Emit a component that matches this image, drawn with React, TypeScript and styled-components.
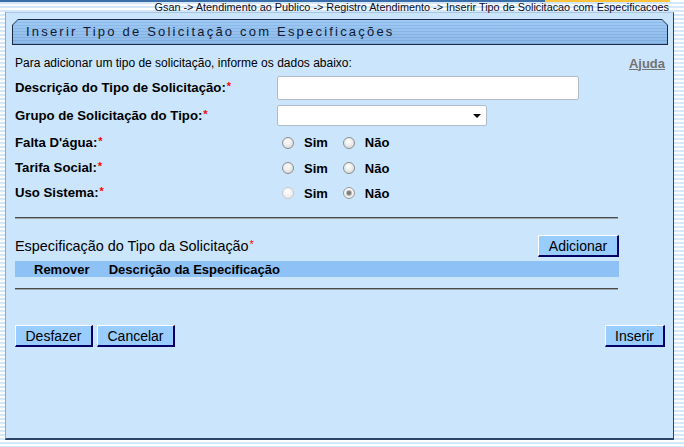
import styled, { createGlobalStyle } from 'styled-components';

const GlobalStyle = createGlobalStyle`
  html, body {
    margin: 0;
    padding: 0;
  }
  body {
    font-family: 'Liberation Sans', Arial, sans-serif;
    color: #000;
  }
`;

const Page = styled.div`
  width: 684px;
  height: 447px;
  overflow: hidden;
  background: repeating-linear-gradient(
    to bottom,
    #ffffff 0px,
    #ffffff 2px,
    #d3e7f8 2px,
    #d3e7f8 4px
  );
`;

const TopLine = styled.div`
  display: flex;
  height: 2px;
  width: 670px;
`;

const LineSegment = styled.div<{ $color: string; $width?: number }>`
  background: ${({ $color }) => $color};
  ${({ $width }) => ($width ? `width: ${$width}px;` : 'flex: 1;')}
`;

const Breadcrumb = styled.div`
  height: 10px;
  line-height: 10px;
  padding-right: 15px;
  text-align: right;
  font-size: 10.85px;
  color: #0c0c24;
  white-space: nowrap;
`;

const Panel = styled.div`
  box-sizing: border-box;
  margin-left: 5px;
  width: 669px;
  height: 428px;
  background: #cbe5fc;
  border-top: 1px solid #a9c6e2;
  border-left: 1px solid #8ea9c6;
  border-right: 1px solid #2b4468;
  border-bottom: 2px solid #2b4468;
`;

const TitleTab = styled.div`
  margin: 6px 5px 0 6px;
  height: 26px;
  padding: 1px;
  box-sizing: border-box;
  background: #1c2a42;
  clip-path: polygon(6px 0, calc(100% - 6px) 0, 100% 6px, 100% 100%, 0 100%, 0 6px);
`;

const TitleInner = styled.div`
  height: 100%;
  box-sizing: border-box;
  padding-left: 13px;
  line-height: 24px;
  font-size: 13px;
  letter-spacing: 2.2px;
  color: #0e1a33;
  background:
    repeating-linear-gradient(to bottom, rgba(255, 255, 255, 0.08) 0 2px, rgba(0, 40, 100, 0.06) 2px 3px),
    linear-gradient(to bottom, #98c6f4, #84b3e6);
  clip-path: polygon(5px 0, calc(100% - 5px) 0, 100% 5px, 100% 100%, 0 100%, 0 5px);
`;

const Content = styled.div`
  padding: 0 8px 0 9px;
`;

const IntroRow = styled.div`
  margin-top: 7px;
  height: 22px;
  display: flex;
  align-items: center;
  justify-content: space-between;
  font-size: 12px;
`;

const HelpLink = styled.a`
  font-size: 13px;
  font-weight: bold;
  color: #737373;
  text-decoration: underline;
  cursor: pointer;
`;

const FormRow = styled.div<{ $height: number }>`
  display: grid;
  grid-template-columns: 262px 1fr;
  align-items: center;
  height: ${({ $height }) => $height}px;
`;

const Label = styled.span`
  font-size: 13.2px;
  font-weight: bold;
`;

const Required = styled.span`
  color: #ff0000;
  font-size: 11px;
  vertical-align: top;
  margin-left: 1px;
`;

const TextInput = styled.input`
  box-sizing: border-box;
  width: 302px;
  height: 24px;
  border: 1px solid #b2bcc8;
  border-radius: 2px;
  background: #fff;
  outline: none;
`;

const SelectBox = styled.div`
  position: relative;
  box-sizing: border-box;
  width: 210px;
  height: 21px;
  border: 1px solid #b2bcc8;
  border-radius: 2px;
  background: #fff;

  &::after {
    content: '';
    position: absolute;
    right: 5px;
    top: 8px;
    border-left: 4px solid transparent;
    border-right: 4px solid transparent;
    border-top: 4px solid #000;
  }
`;

const RadioGroup = styled.div`
  display: flex;
  align-items: center;
  padding-top: 1px;
`;

const Radio = styled.input.attrs({ type: 'radio' })`
  appearance: none;
  box-sizing: border-box;
  width: 12px;
  height: 12px;
  margin: 0 10px 0 5px;
  border-radius: 50%;
  border: 1px solid #8d8d8d;
  background: radial-gradient(circle at 45% 35%, #ffffff 0%, #eeeeee 40%, #cfcfcf 100%);
  display: grid;
  place-items: center;

  &:disabled {
    border-color: #c9c9c9;
    background: radial-gradient(circle at 45% 35%, #ffffff 0%, #f2f2f2 50%, #e2e2e2 100%);
  }

  &:checked::after {
    content: '';
    width: 4px;
    height: 4px;
    border-radius: 50%;
    background: #7a7a7a;
    box-shadow: 0 0 0 1px #b5b5b5;
  }

  &:checked:disabled {
    border-color: #9a9a9a;
  }
`;

const RadioText = styled.span`
  font-size: 13px;
  font-weight: bold;
  margin-right: 10px;
`;

const Divider = styled.div<{ $top: number }>`
  margin-top: ${({ $top }) => $top}px;
  width: 603px;
  border-top: 1px solid #4a4a4a;
  border-bottom: 1px solid #9aa6b2;
`;

const SpecRow = styled.div`
  margin-top: 16px;
  width: 604px;
  height: 22px;
  display: flex;
  align-items: center;
  justify-content: space-between;
`;

const SpecTitle = styled.span`
  font-size: 14.4px;
`;

const TableHeader = styled.div`
  margin-top: 4px;
  width: 604px;
  height: 16px;
  display: flex;
  align-items: center;
  gap: 19px;
  padding-left: 19px;
  box-sizing: border-box;
  background: #8ec2f7;
  font-size: 13px;
  font-weight: bold;
`;

const Footer = styled.div`
  margin-top: 35px;
  display: flex;
  justify-content: space-between;
`;

const ButtonGroup = styled.div`
  display: flex;
  gap: 4px;
`;

const Button = styled.button<{ $width: number }>`
  box-sizing: border-box;
  width: ${({ $width }) => $width}px;
  height: 22px;
  padding: 0;
  background: #99ccff;
  border-style: solid;
  border-width: 1px 2px 2px 1px;
  border-color: #ffffff #000066 #000066 #ffffff;
  font-family: 'Liberation Sans', Arial, sans-serif;
  font-size: 14px;
  color: #000;
  cursor: pointer;
`;

type RadioRow = {
  label: string;
  name: string;
  disabled?: boolean;
  checked?: 'sim' | 'nao';
};

const radioRows: RadioRow[] = [
  { label: "Falta D'água:", name: 'faltaAgua' },
  { label: 'Tarifa Social:', name: 'tarifaSocial' },
  { label: 'Uso Sistema:', name: 'usoSistema', disabled: true, checked: 'nao' },
];

export default function App() {
  return (
    <>
      <GlobalStyle />
      <Page>
        <TopLine>
          <LineSegment $color="#3b6ea8" $width={545} />
          <LineSegment $color="#ffc23c" />
        </TopLine>
        <Breadcrumb>
          Gsan -&gt; Atendimento ao Publico -&gt; Registro Atendimento -&gt; Inserir Tipo de
          Solicitacao com Especificacoes
        </Breadcrumb>
        <Panel>
          <TitleTab>
            <TitleInner>Inserir Tipo de Solicitação com Especificações</TitleInner>
          </TitleTab>
          <Content>
            <IntroRow>
              <span>Para adicionar um tipo de solicitação, informe os dados abaixo:</span>
              <HelpLink>Ajuda</HelpLink>
            </IntroRow>
            <FormRow $height={27}>
              <Label>
                Descrição do Tipo de Solicitação:<Required>*</Required>
              </Label>
              <TextInput type="text" />
            </FormRow>
            <FormRow $height={28}>
              <Label>
                Grupo de Solicitação do Tipo:<Required>*</Required>
              </Label>
              <SelectBox />
            </FormRow>
            {radioRows.map((row, i) => (
              <FormRow key={row.name} $height={i === 0 ? 26 : 25}>
                <Label>
                  {row.label}
                  <Required>*</Required>
                </Label>
                <RadioGroup>
                  <Radio
                    name={row.name}
                    disabled={row.disabled}
                    defaultChecked={row.checked === 'sim'}
                  />
                  <RadioText>Sim</RadioText>
                  <Radio
                    name={row.name}
                    disabled={row.disabled}
                    defaultChecked={row.checked === 'nao'}
                  />
                  <RadioText>Não</RadioText>
                </RadioGroup>
              </FormRow>
            ))}
            <Divider $top={12} />
            <SpecRow>
              <SpecTitle>
                Especificação do Tipo da Solicitação<Required>*</Required>
              </SpecTitle>
              <Button $width={81}>Adicionar</Button>
            </SpecRow>
            <TableHeader>
              <span>Remover</span>
              <span>Descrição da Especificação</span>
            </TableHeader>
            <Divider $top={11} />
            <Footer>
              <ButtonGroup>
                <Button $width={78}>Desfazer</Button>
                <Button $width={78}>Cancelar</Button>
              </ButtonGroup>
              <Button $width={60}>Inserir</Button>
            </Footer>
          </Content>
        </Panel>
      </Page>
    </>
  );
}
